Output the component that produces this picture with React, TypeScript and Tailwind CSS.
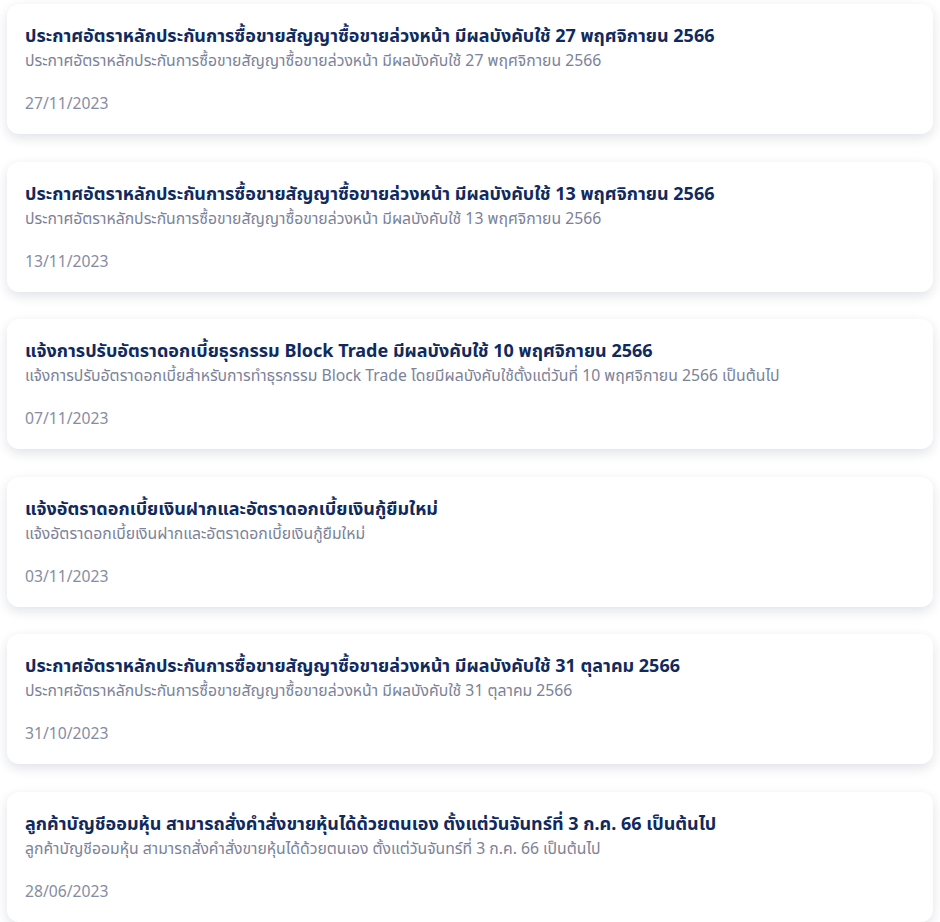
const items = [
  {
    title: "ประกาศอัตราหลักประกันการซื้อขายสัญญาซื้อขายล่วงหน้า มีผลบังคับใช้ 27 พฤศจิกายน 2566",
    desc: "ประกาศอัตราหลักประกันการซื้อขายสัญญาซื้อขายล่วงหน้า มีผลบังคับใช้ 27 พฤศจิกายน 2566",
    date: "27/11/2023",
  },
  {
    title: "ประกาศอัตราหลักประกันการซื้อขายสัญญาซื้อขายล่วงหน้า มีผลบังคับใช้ 13 พฤศจิกายน 2566",
    desc: "ประกาศอัตราหลักประกันการซื้อขายสัญญาซื้อขายล่วงหน้า มีผลบังคับใช้ 13 พฤศจิกายน 2566",
    date: "13/11/2023",
  },
  {
    title: "แจ้งการปรับอัตราดอกเบี้ยธุรกรรม Block Trade มีผลบังคับใช้ 10 พฤศจิกายน 2566",
    desc: "แจ้งการปรับอัตราดอกเบี้ยสำหรับการทำธุรกรรม Block Trade โดยมีผลบังคับใช้ตั้งแต่วันที่ 10 พฤศจิกายน 2566 เป็นต้นไป",
    date: "07/11/2023",
  },
  {
    title: "แจ้งอัตราดอกเบี้ยเงินฝากและอัตราดอกเบี้ยเงินกู้ยืมใหม่",
    desc: "แจ้งอัตราดอกเบี้ยเงินฝากและอัตราดอกเบี้ยเงินกู้ยืมใหม่",
    date: "03/11/2023",
  },
  {
    title: "ประกาศอัตราหลักประกันการซื้อขายสัญญาซื้อขายล่วงหน้า มีผลบังคับใช้ 31 ตุลาคม 2566",
    desc: "ประกาศอัตราหลักประกันการซื้อขายสัญญาซื้อขายล่วงหน้า มีผลบังคับใช้ 31 ตุลาคม 2566",
    date: "31/10/2023",
  },
  {
    title: "ลูกค้าบัญชีออมหุ้น สามารถสั่งคำสั่งขายหุ้นได้ด้วยตนเอง ตั้งแต่วันจันทร์ที่ 3 ก.ค. 66 เป็นต้นไป",
    desc: "ลูกค้าบัญชีออมหุ้น สามารถสั่งคำสั่งขายหุ้นได้ด้วยตนเอง ตั้งแต่วันจันทร์ที่ 3 ก.ค. 66 เป็นต้นไป",
    date: "28/06/2023",
  },
];

// one announcement card
function NewsCard({ title, desc, date }: { title: string; desc: string; date: string }) {
  return (
    <div className="rounded-xl bg-white px-[18px] pt-[19px] pb-[19px] shadow-[0_4px_12px_rgba(15,30,70,0.13)]">
      <div className="text-[18px] leading-[25px] font-bold text-[#102a5e]">{title}</div>
      <div className="text-[15.75px] leading-6 text-[#7b8299]">{desc}</div>
      <div className="mt-[19px] text-[15.7px] leading-6 text-[#868da3]">{date}</div>
    </div>
  );
}

export default function App() {
  return (
    <div
      className="min-h-screen bg-white px-[7px] pt-[4px] pb-[20px]"
      style={{ fontFamily: '"Noto Sans", "Noto Sans Thai", "Noto Sans CJK SC", sans-serif' }}
    >
      <div className="flex flex-col gap-[27.6px]">
        {items.map((it) => (
          <NewsCard key={it.date} {...it} />
        ))}
      </div>
    </div>
  );
}
